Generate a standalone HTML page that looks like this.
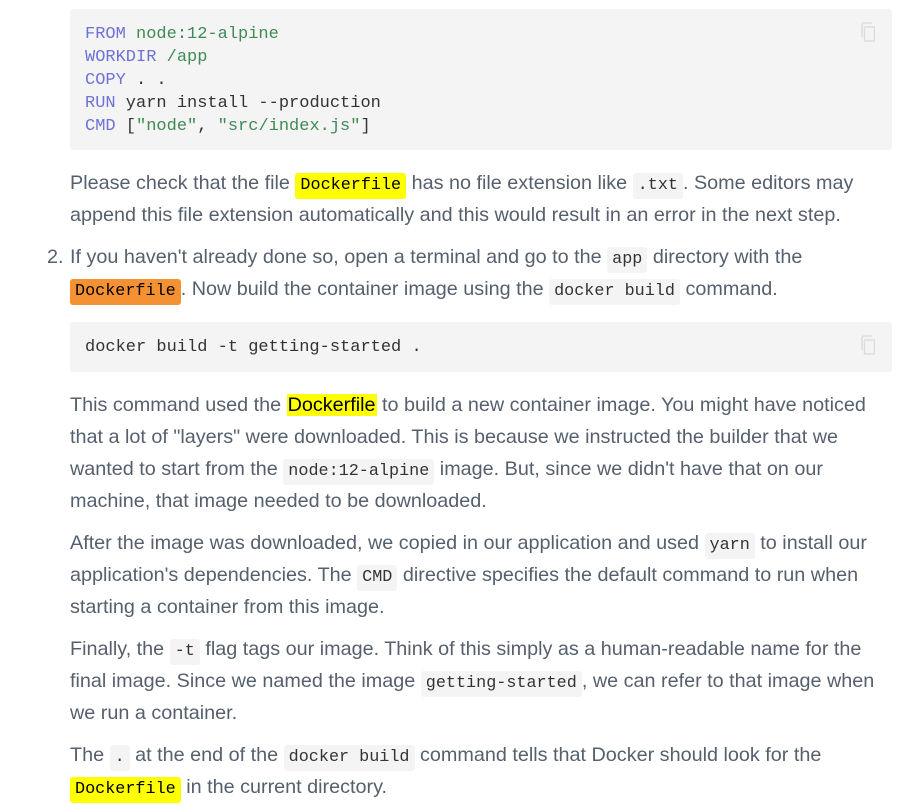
<!DOCTYPE html>
<html><head><meta charset="utf-8"><style>
body{margin:0;background:#fff;width:905px;height:812px;overflow:hidden;font-family:"Liberation Sans",Arial,sans-serif;color:#56606d;font-size:19.8px;}
.wrap{position:absolute;left:70px;top:0;width:822px;}
pre{margin:0;background:#f4f4f4;border-radius:3px;font-family:"Liberation Mono",monospace;font-size:17px;line-height:23px;color:#333;padding:0 15px;position:relative;}
.copy{position:absolute;right:17px;top:13px;width:16px;height:20px;}
p{margin:0;height:32px;line-height:32px;white-space:nowrap;}
code{display:inline-block;line-height:22px;font-family:"Liberation Mono",monospace;font-size:16.8px;background:#f4f4f4;color:#333;padding:2px 5px;border-radius:3px;}
.k{color:#6d72d6}.s{color:#3f8a55}
.y{background:#ffff00;color:#000}
.o{background:#f49133;color:#000}
.hl{background:#ffff00;color:#000;padding:0 1px}
</style></head><body>
<div class="wrap">
<pre style="position:absolute;top:9px;left:0;width:822px;height:141px;box-sizing:border-box;padding-top:14px;"><span class="k">FROM</span> <span class="s">node:12-alpine</span>
<span class="k">WORKDIR</span> <span class="s">/app</span>
<span class="k">COPY</span> . .
<span class="k">RUN</span> yarn install --production
<span class="k">CMD</span> [<span class="s">"node"</span>, <span class="s">"src/index.js"</span>]<svg class="copy" viewBox="0 0 16 20"><path d="M3 15V3a2 2 0 0 1 2-2h8" fill="none" stroke="#ddd" stroke-width="1.5"/><rect x="5.5" y="5" width="10" height="14" fill="none" stroke="#ddd" stroke-width="1.5"/></svg></pre>
<div style="position:absolute;top:167px;left:0;">
<p>Please check that the file <code class="y">Dockerfile</code> has no file extension like <code>.txt</code>. Some editors may</p>
<p>append this file extension automatically and this would result in an error in the next step.</p>
</div>
<div style="position:absolute;top:241px;left:-23px;line-height:32px;">2.</div>
<div style="position:absolute;top:241px;left:0;">
<p>If you haven't already done so, open a terminal and go to the <code>app</code> directory with the</p>
<p><code class="o">Dockerfile</code>. Now build the container image using the <code>docker build</code> command.</p>
</div>
<pre style="position:absolute;top:322px;left:0;width:822px;height:50px;box-sizing:border-box;padding-top:14px;">docker build -t getting-started .<svg class="copy" viewBox="0 0 16 20"><path d="M3 15V3a2 2 0 0 1 2-2h8" fill="none" stroke="#ddd" stroke-width="1.5"/><rect x="5.5" y="5" width="10" height="14" fill="none" stroke="#ddd" stroke-width="1.5"/></svg></pre>
<div style="position:absolute;top:389px;left:0;">
<p>This command used the <span class="hl">Dockerfile</span> to build a new container image. You might have noticed</p>
<p>that a lot of "layers" were downloaded. This is because we instructed the builder that we</p>
<p>wanted to start from the <code>node:12-alpine</code> image. But, since we didn't have that on our</p>
<p>machine, that image needed to be downloaded.</p>
</div>
<div style="position:absolute;top:527px;left:0;">
<p>After the image was downloaded, we copied in our application and used <code>yarn</code> to install our</p>
<p>application's dependencies. The <code>CMD</code> directive specifies the default command to run when</p>
<p>starting a container from this image.</p>
</div>
<div style="position:absolute;top:633px;left:0;">
<p>Finally, the <code>-t</code> flag tags our image. Think of this simply as a human-readable name for the</p>
<p>final image. Since we named the image <code>getting-started</code>, we can refer to that image when</p>
<p>we run a container.</p>
</div>
<div style="position:absolute;top:739px;left:0;">
<p>The <code>.</code> at the end of the <code>docker build</code> command tells that Docker should look for the</p>
<p><code class="y">Dockerfile</code> in the current directory.</p>
</div>
</div>
</body></html>
